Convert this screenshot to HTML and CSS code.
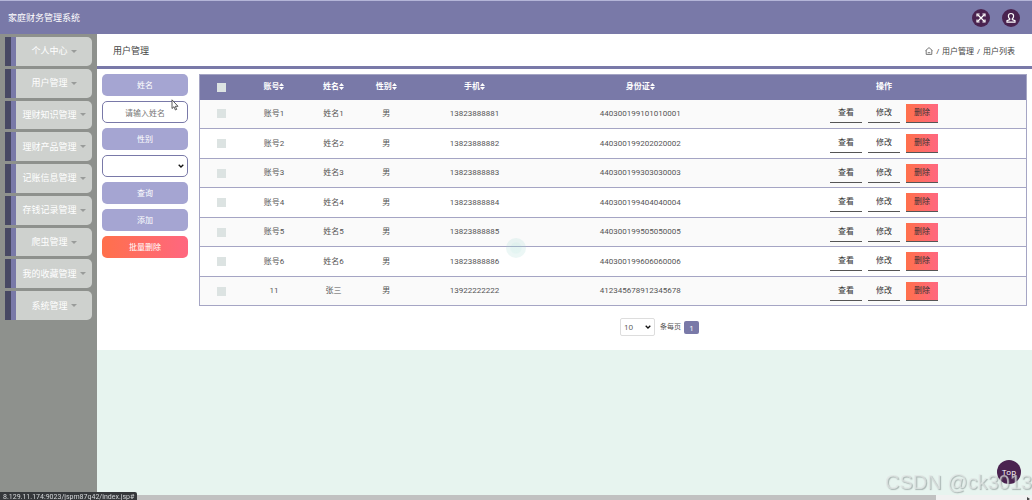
FILE: index.html
```html
<!DOCTYPE html>
<html lang="zh-CN">
<head>
<meta charset="utf-8">
<meta name="viewport" content="width=device-width, initial-scale=1">
<title>家庭财务管理系统</title>
<link rel="stylesheet" href="styles.css">
</head>
<body>
<svg class="defs" width="0" height="0" aria-hidden="true">
  <symbol id="sort" viewBox="0 0 5 7"><path d="M0 3 2.500 0 5 3zM0 4h5L2.500 7z" fill="currentColor"/></symbol>
</svg>
<header class="topbar">
  <h1 class="brand">家庭财务管理系统</h1>
  <div class="tools">
    <button class="tool" type="button" aria-label="全屏">
      <svg viewBox="0 0 18 18" width="18" height="18" fill="none" stroke="#fff"><path d="M5.500 5.500l7 7M12.500 5.500l-7 7" stroke-width="1.300"/><path d="M5 7.600V5h2.600M10.400 5H13v2.600M13 10.400V13h-2.600M7.600 13H5v-2.600" stroke-width="1.200"/></svg>
    </button>
    <button class="tool" type="button" aria-label="用户">
      <svg viewBox="0 0 18 18" width="18" height="18" fill="none" stroke="#fff" stroke-width="1.200"><path d="M9 4.500c-1.700 0-2.600 1.100-2.600 2.600 0 1.200.5 2.200 1.300 2.700v.8L5 11.600V13.200h8v-1.600l-2.700-1v-.8c.8-.5 1.300-1.500 1.300-2.700C11.600 5.600 10.700 4.500 9 4.500z"/></svg>
    </button>
  </div>
</header>
<div class="shell">
  <nav class="sidebar">
    <ul class="menu">
      <li><button class="menu-item" type="button">个人中心<i class="caret"></i></button></li>
      <li><button class="menu-item" type="button">用户管理<i class="caret"></i></button></li>
      <li><button class="menu-item" type="button">理财知识管理<i class="caret"></i></button></li>
      <li><button class="menu-item" type="button">理财产品管理<i class="caret"></i></button></li>
      <li><button class="menu-item" type="button">记账信息管理<i class="caret"></i></button></li>
      <li><button class="menu-item" type="button">存钱记录管理<i class="caret"></i></button></li>
      <li><button class="menu-item" type="button">爬虫管理<i class="caret"></i></button></li>
      <li><button class="menu-item" type="button">我的收藏管理<i class="caret"></i></button></li>
      <li><button class="menu-item" type="button">系统管理<i class="caret"></i></button></li>
    </ul>
  </nav>
  <main class="page">
    <div class="page-head">
      <h2 class="page-title">用户管理</h2>
      <div class="crumbs">
        <a href="#" aria-label="首页"><svg viewBox="0 0 8 8" width="8" height="8" fill="none" stroke="#555" stroke-width=".8"><path d="M.5 3.700 4 .6l3.500 3.100M1.200 3.200v4.200h5.600V3.200M2.700 5.700h2.600"/></svg></a>
        <span>/</span><a href="#">用户管理</a><span>/</span><span>用户列表</span>
      </div>
    </div>
    <div class="panel">
      <form class="filters">
        <label class="field-label" for="name">姓名</label>
        <input class="field" id="name" type="text" placeholder="请输入姓名">
        <label class="field-label" for="sex">性别</label>
        <select class="field" id="sex"><option></option><option>男</option><option>女</option></select>
        <button class="action" type="button">查询</button>
        <button class="action" type="button">添加</button>
        <button class="action danger" type="button">批量删除</button>
      </form>
      <section class="list">
        <table class="users">
          <colgroup><col class="c-check"><col class="c-account"><col class="c-name"><col class="c-sex"><col class="c-phone"><col class="c-id"><col class="c-ops"></colgroup>
          <thead>
            <tr>
              <th><input class="check" type="checkbox" aria-label="全选"></th>
              <th>账号<svg class="sort"><use href="#sort"/></svg></th>
              <th>姓名<svg class="sort"><use href="#sort"/></svg></th>
              <th>性别<svg class="sort"><use href="#sort"/></svg></th>
              <th>手机<svg class="sort"><use href="#sort"/></svg></th>
              <th>身份证<svg class="sort"><use href="#sort"/></svg></th>
              <th>操作</th>
            </tr>
          </thead>
          <tbody>
            <tr><td><input class="check" type="checkbox" aria-label="选择"></td><td>账号1</td><td>姓名1</td><td>男</td><td>13823888881</td><td>440300199101010001</td><td><div class="ops"><button class="op" type="button">查看</button><button class="op" type="button">修改</button><button class="op del" type="button">删除</button></div></td></tr>
            <tr><td><input class="check" type="checkbox" aria-label="选择"></td><td>账号2</td><td>姓名2</td><td>男</td><td>13823888882</td><td>440300199202020002</td><td><div class="ops"><button class="op" type="button">查看</button><button class="op" type="button">修改</button><button class="op del" type="button">删除</button></div></td></tr>
            <tr><td><input class="check" type="checkbox" aria-label="选择"></td><td>账号3</td><td>姓名3</td><td>男</td><td>13823888883</td><td>440300199303030003</td><td><div class="ops"><button class="op" type="button">查看</button><button class="op" type="button">修改</button><button class="op del" type="button">删除</button></div></td></tr>
            <tr><td><input class="check" type="checkbox" aria-label="选择"></td><td>账号4</td><td>姓名4</td><td>男</td><td>13823888884</td><td>440300199404040004</td><td><div class="ops"><button class="op" type="button">查看</button><button class="op" type="button">修改</button><button class="op del" type="button">删除</button></div></td></tr>
            <tr><td><input class="check" type="checkbox" aria-label="选择"></td><td>账号5</td><td>姓名5</td><td>男</td><td>13823888885</td><td>440300199505050005</td><td><div class="ops"><button class="op" type="button">查看</button><button class="op" type="button">修改</button><button class="op del" type="button">删除</button></div></td></tr>
            <tr><td><input class="check" type="checkbox" aria-label="选择"></td><td>账号6</td><td>姓名6</td><td>男</td><td>13823888886</td><td>440300199606060006</td><td><div class="ops"><button class="op" type="button">查看</button><button class="op" type="button">修改</button><button class="op del" type="button">删除</button></div></td></tr>
            <tr><td><input class="check" type="checkbox" aria-label="选择"></td><td>11</td><td>张三</td><td>男</td><td>13922222222</td><td>412345678912345678</td><td><div class="ops"><button class="op" type="button">查看</button><button class="op" type="button">修改</button><button class="op del" type="button">删除</button></div></td></tr>
          </tbody>
        </table>
        <div class="pager">
          <select class="size" id="size"><option>10</option></select>
          <label class="size-label" for="size">条每页</label>
          <button class="page-no" type="button">1</button>
        </div>
      </section>
    </div>
  </main>
</div>
<span class="ripple"></span>
<svg class="cursor" viewBox="0 0 8 12" width="8" height="12"><path d="M1 .8v8.700l2-1.800 1.400 3.300 1.300-.6-1.400-3.100H7z" fill="#fff" stroke="#333" stroke-width=".8"/></svg>
<button class="to-top" type="button">Top</button>
<div class="scrollbar"><span class="thumb"></span><span class="arrow"></span></div>
<div class="status">8.129.11.174:9023/jspm87q42/index.jsp#</div>
<div class="watermark">CSDN @ck3013</div>
</body>
</html>
```
FILE: styles.css
```css
* { box-sizing: border-box; }

body {
  margin: 0;
  min-height: 100vh;
  display: flex;
  flex-direction: column;
  overflow: hidden;
  background: #e7f4ef;
  color: #555;
  font: 8px/12px "Open Sans", "Noto Sans CJK SC", sans-serif;
}

button, input, select { font: inherit; color: inherit; margin: 0; padding: 0; }
button { border: 0; cursor: pointer; }
a { color: inherit; text-decoration: none; }
h1, h2 { margin: 0; }
.defs { position: absolute; }

.topbar {
  display: flex;
  align-items: center;
  justify-content: space-between;
  height: 34px;
  padding: 0 12px 0 8px;
  background: #7979a8;
  border-top: 1px solid #b4b5d8;
}
.brand { color: #fff; font-size: 9px; font-weight: 400; }
.tools { display: flex; gap: 12px; }
.tool {
  width: 18px;
  height: 18px;
  border-radius: 50%;
  background: #4a2350;
}
.tool svg { display: block; }

.shell { flex: 1; display: flex; }

.sidebar {
  flex: none;
  width: 97px;
  padding: 3px 5px;
  background: #8e918d;
}
.menu {
  display: grid;
  grid-auto-rows: 1fr;
  gap: 3px;
  height: 283px;
  margin: 0;
  padding: 0;
  list-style: none;
}
.menu li { display: flex; }
.menu-item {
  flex: 1;
  display: flex;
  align-items: center;
  justify-content: center;
  gap: 3px;
  color: #fff;
  font-size: 9px;
  white-space: nowrap;
  background: linear-gradient(to right, #474863 6px, #7979a8 6px, #7979a8 11px, #ced1ce 11px);
  padding-left: 11px;
  border-radius: 0 5px 5px 0;
}
.caret {
  border: solid transparent;
  border-width: 3px 3px 0;
  border-top-color: #999c9a;
}

.page { flex: 1; min-width: 0; }
.page-head {
  display: flex;
  align-items: center;
  justify-content: space-between;
  height: 35px;
  padding: 2px 17px 0 16px;
  background: #fff;
  border-bottom: 3px solid #7979a8;
}
.page-title { font-size: 9px; font-weight: 400; color: #444; }
.crumbs { display: flex; align-items: center; gap: 3px; color: #444; }
.crumbs svg { display: block; }

.panel {
  display: flex;
  gap: 11px;
  padding: 5px 5px 14px;
  background: #fff;
}
.filters { flex: none; width: 86px; display: flex; flex-direction: column; gap: 5px; }
.field-label, .action {
  height: 22px;
  line-height: 22px;
  text-align: center;
  color: #fff;
  background: #a5a5d2;
  border-radius: 5px;
}
.field {
  width: 100%;
  height: 22px;
  border: 1px solid #7979a8;
  border-radius: 5px;
  background: #fff;
  text-align: center;
}
.field::placeholder { color: #777; }
.action.danger, .op.del { background: linear-gradient(to right, #ff704b, #ff6780); }

select.field, .size {
  appearance: none;
  background: #fff url("data:image/svg+xml,%3Csvg xmlns='http://www.w3.org/2000/svg' viewBox='0 0 6 4'%3E%3Cpath d='M.7.7 3 3 5.300.7' fill='none' stroke='%23111' stroke-width='1.300'/%3E%3C/svg%3E") no-repeat right 3px center / 6px 4px;
}

.list { flex: 1; min-width: 0; }
.users {
  width: 100%;
  table-layout: fixed;
  border-collapse: collapse;
  border: 1px solid #a5a5c4;
  text-align: center;
  font-family: Roboto, "Noto Sans CJK SC", sans-serif;
}
.c-check { width: 5.300%; }
.c-account { width: 7.400%; }
.c-name { width: 7%; }
.c-sex { width: 5.800%; }
.c-phone { width: 15.500%; }
.c-id { width: 24.600%; }
.c-ops { width: 34.400%; }
.users th, .users td { padding: 0; }
.users th { height: 25px; color: #fff; background: #7979a8; font-weight: 700; }
.users td { height: 29px; border-bottom: 1px solid #a5a5c4; }
.users tr:nth-child(even) td { height: 30px; }
.users tbody tr:nth-child(odd) { background: #fafafa; }
.sort { width: 5px; height: 7px; vertical-align: -1px; }
.check {
  appearance: none;
  display: block;
  width: 9px;
  height: 9px;
  margin: 0 auto;
  background: #dce3e2;
}
.ops { display: flex; justify-content: center; gap: 6px; }
.op {
  width: 32px;
  height: 19px;
  color: #333;
  background: transparent;
  border-bottom: 1px solid #555;
}

.pager {
  display: flex;
  align-items: center;
  justify-content: center;
  padding-top: 12px;
  padding-left: 93px;
}
.size {
  width: 35px;
  height: 18px;
  padding-left: 3px;
  border: 1px solid #ddd;
  border-radius: 2px;
}
.size-label { margin: 0 3px 0 5px; font-size: 7px; }
.page-no {
  width: 15px;
  height: 13px;
  line-height: 13px;
  color: #fff;
  background: #7979a8;
  border-radius: 2px;
}

.ripple {
  position: absolute;
  left: 506px;
  top: 238px;
  width: 20px;
  height: 20px;
  border-radius: 50%;
  background: radial-gradient(circle, rgba(150, 215, 205, .26) 35%, rgba(160, 215, 208, .2) 45%);
}
.cursor { position: absolute; left: 171px; top: 99px; }
.to-top {
  position: fixed;
  right: 11px;
  bottom: 16px;
  width: 24px;
  height: 24px;
  border-radius: 50%;
  color: #fff;
  background: #4a2350;
}
.scrollbar {
  position: fixed;
  left: 0;
  right: 0;
  bottom: 0;
  height: 5px;
  display: flex;
  justify-content: space-between;
  background: #f1f1f1;
}
.thumb { width: 90.700%; background: #c1c1c1; }
.arrow {
  margin: 2px 2px 0 0;
  height: 0;
  border: solid transparent;
  border-width: 2px 0 2px 3px;
  border-left-color: #444;
}
.status {
  position: fixed;
  left: 0;
  bottom: 0;
  height: 8px;
  padding: 0 3px;
  white-space: nowrap;
  font: 7px/10px Roboto, sans-serif;
  color: #d5d8da;
  background: #35383b;
  border-top-right-radius: 2px;
}
.watermark {
  position: fixed;
  right: 0;
  bottom: 7px;
  font: 20px/22px "Liberation Sans", sans-serif;
  color: rgba(225, 230, 228, .7);
  text-shadow: 1px 1px 1px rgba(110, 120, 120, .5);
  pointer-events: none;
}
```
